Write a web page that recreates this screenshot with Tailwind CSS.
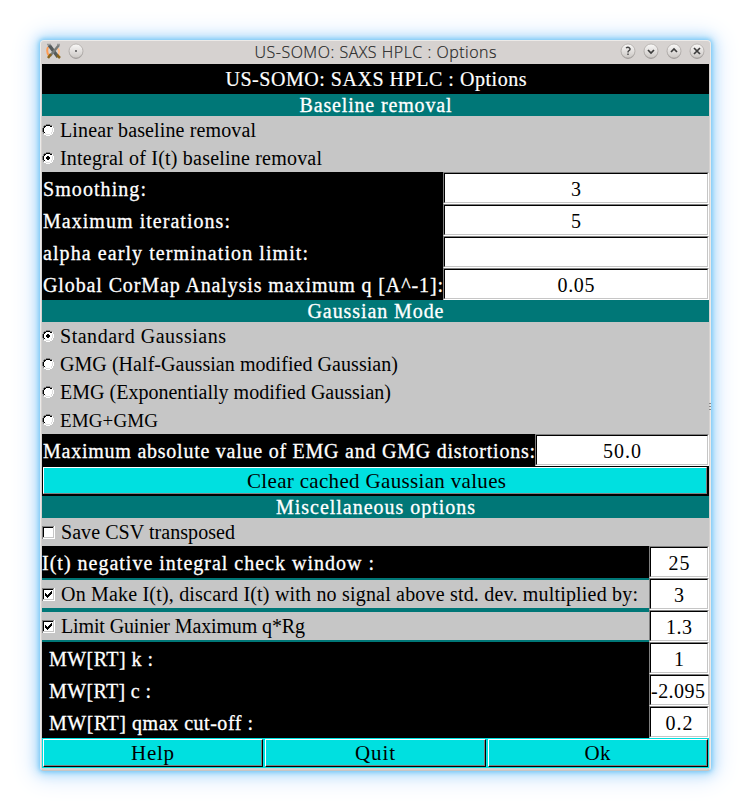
<!DOCTYPE html>
<html lang="en">
<head>
<meta charset="utf-8">
<title>US-SOMO: SAXS HPLC : Options</title>
<script src="https://cdn.jsdelivr.net/npm/@tailwindcss/browser@4"></script>
</head>
<body class="bg-white w-[751px] h-[812px] overflow-hidden p-10 font-['Liberation_Serif',serif] text-[20px] leading-none">
<svg class="absolute w-0 h-0">
  <defs>
    <linearGradient id="knob" x1="0" y1="0" x2="0" y2="1"><stop offset="0" stop-color="#faf9f8"/><stop offset="1" stop-color="#cbc7c4"/></linearGradient>
    <g id="round"><circle cx="8" cy="8.8" r="7.1" fill="#9d9997"/><circle cx="8" cy="8" r="7" fill="url(#knob)" stroke="#aaa6a4" stroke-width=".7"/></g>
    <g id="radio" shape-rendering="crispEdges">
      <circle cx="6" cy="6" r="5" fill="#fff"/>
      <path d="M4 .5h4M2 1.5h2M8 1.5h2M1.500 2v2M.5 4v4M1.500 8v2" stroke="#808080" fill="none"/>
      <path d="M4 1.500h4M2 2.500h2M8 2.500h2M2.500 3v1M1.500 4v4M2.500 8v1" stroke="#000" fill="none"/>
      <path d="M11.500 4v4M10.500 2v2M10.500 8v2M8 10.500h2M2 10.500h2M4 11.500h4" stroke="#fff" fill="none"/>
      <path d="M10.500 4v4M4 10.500h4M9.500 8v2M3 9.500h1" stroke="#dedede" fill="none"/>
    </g>
    <g id="dot" shape-rendering="crispEdges"><path d="M5 4h2v1h1v2h-1v1h-2v-1h-1v-2h1z"/></g>
    <g id="box" shape-rendering="crispEdges">
      <path d="M0 0h13v13H0z" fill="#fff"/><path d="M0 12.500V.5h12" stroke="#808080" fill="none"/><path d="M.5 12V0" stroke="#808080" fill="none"/><path d="M1.500 11V1.500H11" stroke="#000" fill="none"/><path d="M1 11.500h10.500V1" stroke="#c6c6c6" fill="none"/>
    </g>
    <path id="tick" shape-rendering="crispEdges" d="M3 5h1v1h1v1h1v-1h1v-1h1v-1h1v-1h1v3h-1v1h-1v1h-1v1h-1v1h-1v-1h-1v-1h-1z"/>
  </defs>
</svg>
<main class="w-[671px] h-[731px] rounded-[4px] bg-[#d6d2d0] border border-[#eceae8] border-b-[#c8c4c2] px-px flex flex-col shadow-[0_0_4px_1px_#74c8f6,0_0_12px_3px_#a8dafb,0_1px_24px_7px_#dcebfd]">
  <header class="h-[23px] shrink-0 flex items-center justify-between pl-1 pr-[4px] pb-[3px] relative whitespace-nowrap">
    <div class="flex gap-[6px] items-center">
      <svg class="w-4 h-4" viewBox="0 0 16 16"><path d="M2 4Q0 9 3 13" stroke="#ff9b50" stroke-width="2" fill="none"/><path d="M10 5Q15 6 12 12" stroke="#ffc18f" stroke-width="2" fill="none"/><path d="M3 2L12 14" stroke="#555b5c" stroke-width="3.500"/><path d="M13 2L4 13" stroke="#777b79" stroke-width="2.500"/><path d="M5 11l-3 4M11 12l3 3" stroke="#89641c" stroke-width="2.500"/><path d="M1 1.500h4M11 1.500h3" stroke="#999" stroke-width="1.500"/></svg>
      <svg class="w-4 h-[17px]" viewBox="0 0 16 17"><use href="#round"/><circle cx="8" cy="8" r=".9" fill="#444"/></svg>
    </div>
    <div class="absolute inset-x-0 top-0 h-[22px] flex items-center justify-center font-['Open_Sans',sans-serif] font-light text-[16px] text-[#222] [-webkit-text-stroke:0.2px_#333]"><span data-w="242">US-SOMO: SAXS HPLC : Options</span></div>
    <div class="flex gap-[7px]">
      <svg class="w-4 h-[17px]" viewBox="0 0 16 17"><use href="#round"/><path d="M6 5Q8 3.500 9.500 5T8.500 8Q8 8.500 8 9.500M8 10.500v1.500" stroke="#444" stroke-width="1.400" fill="none"/></svg>
      <svg class="w-4 h-[17px]" viewBox="0 0 16 17"><use href="#round"/><path d="M5 7l3 3 3-3" stroke="#3c3c3c" stroke-width="1.700" fill="none"/></svg>
      <svg class="w-4 h-[17px]" viewBox="0 0 16 17"><use href="#round"/><path d="M5 9l3-3 3 3" stroke="#3c3c3c" stroke-width="1.700" fill="none"/></svg>
      <svg class="w-4 h-[17px]" viewBox="0 0 16 17"><use href="#round"/><path d="M5 5l6 6M11 5l-6 6" stroke="#3c3c3c" stroke-width="1.700" fill="none"/></svg>
    </div>
    <svg class="absolute left-[667px] top-[361px] w-[2px] h-[9px]" viewBox="0 0 2 9"><path d="M0 1.500h2M0 4.500h2M0 7.500h2" stroke="#888"/></svg>
  </header>
  <div class="w-[667px] shrink-0 flex flex-col text-black whitespace-nowrap">
    <h1 class="h-[30px] bg-black text-white text-[20px] flex items-center justify-center pl-px [-webkit-text-stroke:0.2px_white]"><span data-w="301">US-SOMO: SAXS HPLC : Options</span></h1>
    <h2 class="h-[22px] bg-[#007777] text-white flex items-center justify-center [-webkit-text-stroke:0.3px_white]"><span data-w="152">Baseline removal</span></h2>
    <section class="bg-[#c6c6c6]">
      <label class="h-7 flex items-center gap-[6px]"><svg class="w-3 h-3"><use href="#radio"/></svg><span data-w="196">Linear baseline removal</span></label>
      <label class="h-7 flex items-center gap-[6px]"><svg class="w-3 h-3"><use href="#radio"/><use href="#dot"/></svg><span data-w="262">Integral of I(t) baseline removal</span></label>
    </section>
    <section class="bg-black grid grid-cols-[401px_266px] auto-rows-[32px]">
      <div class="flex items-center pl-px pt-px text-white [-webkit-text-stroke:0.3px_white]"><span data-w="103">Smoothing:</span></div>
      <div class="bg-white border border-t-[#808080] border-l-[#808080] border-r-white border-b-white flex"><div class="flex-1 border border-t-black border-l-black border-r-[#c6c6c6] border-b-[#c6c6c6] flex items-center justify-center pt-px">3</div></div>
      <div class="flex items-center pl-px pt-px text-white [-webkit-text-stroke:0.3px_white]"><span data-w="187">Maximum iterations:</span></div>
      <div class="bg-white border border-t-[#808080] border-l-[#808080] border-r-white border-b-white flex"><div class="flex-1 border border-t-black border-l-black border-r-[#c6c6c6] border-b-[#c6c6c6] flex items-center justify-center pt-px">5</div></div>
      <div class="flex items-center pl-px pt-px text-white [-webkit-text-stroke:0.3px_white]"><span data-w="265">alpha early termination limit:</span></div>
      <div class="bg-white border border-t-[#808080] border-l-[#808080] border-r-white border-b-white flex"><div class="flex-1 border border-t-black border-l-black border-r-[#c6c6c6] border-b-[#c6c6c6]"></div></div>
      <div class="flex items-center pl-px pt-px text-white [-webkit-text-stroke:0.3px_white]"><span data-w="400">Global CorMap Analysis maximum q [A^-1]:</span></div>
      <div class="bg-white border border-t-[#808080] border-l-[#808080] border-r-white border-b-white flex"><div class="flex-1 border border-t-black border-l-black border-r-[#c6c6c6] border-b-[#c6c6c6] flex items-center justify-center pt-px"><span data-w="37">0.05</span></div></div>
    </section>
    <h2 class="h-[22px] bg-[#007777] text-white flex items-center justify-center [-webkit-text-stroke:0.3px_white]"><span data-w="136">Gaussian Mode</span></h2>
    <section class="bg-[#c6c6c6]">
      <label class="h-7 flex items-center gap-[6px]"><svg class="w-3 h-3"><use href="#radio"/><use href="#dot"/></svg><span data-w="166">Standard Gaussians</span></label>
      <label class="h-7 flex items-center gap-[6px]"><svg class="w-3 h-3"><use href="#radio"/></svg><span data-w="338">GMG (Half-Gaussian modified Gaussian)</span></label>
      <label class="h-7 flex items-center gap-[6px]"><svg class="w-3 h-3"><use href="#radio"/></svg><span data-w="331">EMG (Exponentially modified Gaussian)</span></label>
      <label class="h-7 flex items-center gap-[6px]"><svg class="w-3 h-3"><use href="#radio"/></svg><span class="text-[19px]" data-w="98">EMG+GMG</span></label>
    </section>
    <section class="bg-black grid grid-cols-[493px_174px] h-8">
      <div class="flex items-center pl-px pt-px text-white [-webkit-text-stroke:0.3px_white]"><span data-w="492">Maximum absolute value of EMG and GMG distortions:</span></div>
      <div class="bg-white border border-t-[#808080] border-l-[#808080] border-r-white border-b-white flex"><div class="flex-1 border border-t-black border-l-black border-r-[#c6c6c6] border-b-[#c6c6c6] flex items-center justify-center pt-px"><span data-w="38">50.0</span></div></div>
    </section>
    <div class="h-[30px] bg-black pl-px pt-px pr-[2px] pb-[2px] flex"><button class="flex-1 bg-[#00e0e0] border border-t-white border-l-white border-r-[#808080] border-b-[#808080] text-[21px] flex items-center justify-center pt-px pl-[3px]"><span data-w="259">Clear cached Gaussian values</span></button></div>
    <h2 class="h-[22px] bg-[#007777] text-white flex items-center justify-center [-webkit-text-stroke:0.3px_white]"><span data-w="199">Miscellaneous options</span></h2>
    <label class="h-7 bg-[#c6c6c6] flex items-center gap-[6px]"><svg class="w-[13px] h-[13px]"><use href="#box"/></svg><span data-w="174">Save CSV transposed</span></label>
    <section class="bg-black grid grid-cols-[607px_60px] auto-rows-[32px]">
      <div class="flex items-center pt-px text-white [-webkit-text-stroke:0.3px_white]"><span data-w="332">I(t) negative integral check window :</span></div>
      <div class="bg-white border border-t-[#808080] border-l-[#808080] border-r-white border-b-white flex"><div class="flex-1 border border-t-black border-l-black border-r-[#c6c6c6] border-b-[#c6c6c6] flex items-center justify-center pt-px"><span data-w="21">25</span></div></div>
      <label class="flex items-center gap-[6px] bg-[#c6c6c6] border-y-2 border-[#007777]"><svg class="w-[13px] h-[13px]"><use href="#box"/><use href="#tick"/></svg><span data-w="577">On Make I(t), discard I(t) with no signal above std. dev. multiplied by:</span></label>
      <div class="bg-white border border-t-[#808080] border-l-[#808080] border-r-white border-b-white flex"><div class="flex-1 border border-t-black border-l-black border-r-[#c6c6c6] border-b-[#c6c6c6] flex items-center justify-center pt-px">3</div></div>
      <label class="flex items-center gap-[6px] bg-[#c6c6c6] border-y-2 border-[#007777]"><svg class="w-[13px] h-[13px]"><use href="#box"/><use href="#tick"/></svg><span data-w="244">Limit Guinier Maximum q*Rg</span></label>
      <div class="bg-white border border-t-[#808080] border-l-[#808080] border-r-white border-b-white flex"><div class="flex-1 border border-t-black border-l-black border-r-[#c6c6c6] border-b-[#c6c6c6] flex items-center justify-center pt-px"><span data-w="26">1.3</span></div></div>
      <div class="flex items-center pl-[7px] pt-px text-white [-webkit-text-stroke:0.3px_white]"><span data-w="104">MW[RT] k :</span></div>
      <div class="bg-white border border-t-[#808080] border-l-[#808080] border-r-white border-b-white flex"><div class="flex-1 border border-t-black border-l-black border-r-[#c6c6c6] border-b-[#c6c6c6] flex items-center justify-center pt-px">1</div></div>
      <div class="flex items-center pl-[7px] pt-px text-white [-webkit-text-stroke:0.3px_white]"><span data-w="102">MW[RT] c :</span></div>
      <div class="bg-white border border-t-[#808080] border-l-[#808080] border-r-white border-b-white flex"><div class="flex-1 border border-t-black border-l-black border-r-[#c6c6c6] border-b-[#c6c6c6] flex items-center justify-center pt-px pr-[3px]"><span data-w="54">-2.095</span></div></div>
      <div class="flex items-center pl-[7px] pt-px text-white [-webkit-text-stroke:0.3px_white]"><span data-w="204">MW[RT] qmax cut-off :</span></div>
      <div class="bg-white border border-t-[#808080] border-l-[#808080] border-r-white border-b-white flex"><div class="flex-1 border border-t-black border-l-black border-r-[#c6c6c6] border-b-[#c6c6c6] flex items-center justify-center pt-px"><span data-w="27">0.2</span></div></div>
    </section>
    <footer class="h-[30px] bg-[#00e0e0] grid grid-cols-[222px_223px_222px] text-[21px]">
      <div class="p-px flex"><div class="flex-1 border border-t-white border-l-white border-r-black border-b-black flex"><button class="flex-1 border-r border-b border-[#808080] flex items-center justify-center pt-px"><span data-w="43">Help</span></button></div></div>
      <div class="p-px flex"><div class="flex-1 border border-t-white border-l-white border-r-black border-b-black flex"><button class="flex-1 border-r border-b border-[#808080] flex items-center justify-center pt-px"><span data-w="40">Quit</span></button></div></div>
      <div class="p-px flex"><div class="flex-1 border border-t-white border-l-white border-r-black border-b-black flex"><button class="flex-1 border-r border-b border-[#808080] flex items-center justify-center pt-px"><span data-w="26">Ok</span></button></div></div>
    </footer>
  </div>
</main>
<script>
// Track each caption so that it spans its nominal width.
addEventListener('load', () => {
  for (const el of document.querySelectorAll('[data-w]')) {
    const s = (el.dataset.w - el.getBoundingClientRect().width) / (el.textContent.length - 1);
    el.style.letterSpacing = s + 'px';
    el.style.marginRight = -s + 'px';
  }
});
</script>
</body>
</html>
